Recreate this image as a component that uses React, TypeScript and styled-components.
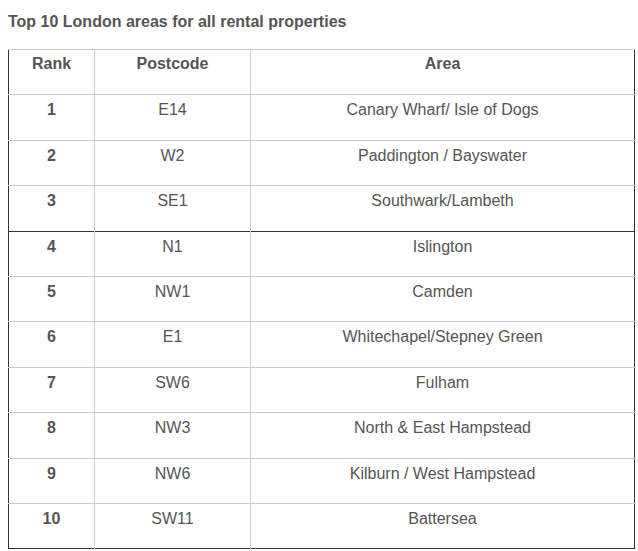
import React from "react";
import styled, { createGlobalStyle } from "styled-components";

const Global = createGlobalStyle`
  html, body { margin: 0; padding: 0; background: #fff; }
  body { font-family: "Liberation Sans", Arial, Helvetica, sans-serif; color: #555; }
`;

const Page = styled.div`
  padding: 13px 4px 0 8px;
`;

const Title = styled.h2`
  margin: 0 0 19px 0;
  font-size: 16px;
  line-height: 17px;
  font-weight: 700;
  color: #555;
`;

const Table = styled.table`
  border-collapse: collapse;
  width: 626px;
  border: 1px solid #333;
  table-layout: fixed;
`;

const Row = styled.tr<{ $dark?: boolean }>`
  height: 45.4px;
  border-top: 1px solid ${(p) => (p.$dark ? "#333" : "#ccc")};
`;

const Cell = styled.td<{ $bold?: boolean }>`
  border-left: 1px solid #ccc;
  padding: 5px 4px 0 4px;
  vertical-align: top;
  text-align: center;
  font-size: 16px;
  line-height: 20px;
  font-weight: ${(p) => (p.$bold ? 700 : 400)};
  color: #555;
  &:first-child { border-left: none; }
`;

const HeadCell = styled.th`
  border-left: 1px solid #ccc;
  padding: 4px 4px 0 4px;
  vertical-align: top;
  text-align: center;
  font-size: 16px;
  line-height: 20px;
  font-weight: 700;
  color: #555;
  &:first-child { border-left: none; }
`;

const rows: [string, string, string][] = [
  ["1", "E14", "Canary Wharf/ Isle of Dogs"],
  ["2", "W2", "Paddington / Bayswater"],
  ["3", "SE1", "Southwark/Lambeth"],
  ["4", "N1", "Islington"],
  ["5", "NW1", "Camden"],
  ["6", "E1", "Whitechapel/Stepney Green"],
  ["7", "SW6", "Fulham"],
  ["8", "NW3", "North & East Hampstead"],
  ["9", "NW6", "Kilburn / West Hampstead"],
  ["10", "SW11", "Battersea"],
];

export default function App() {
  return (
    <Page>
      <Global />
      <Title>Top 10 London areas for all rental properties</Title>
      <Table>
        <colgroup>
          <col style={{ width: 86 }} />
          <col style={{ width: 156 }} />
          <col style={{ width: 384 }} />
        </colgroup>
        <thead>
          <Row>
            <HeadCell>Rank</HeadCell>
            <HeadCell>Postcode</HeadCell>
            <HeadCell>Area</HeadCell>
          </Row>
        </thead>
        <tbody>
          {rows.map(([r, p, a]) => (
            <Row key={r} $dark={r === "4"}>
              <Cell $bold>{r}</Cell>
              <Cell>{p}</Cell>
              <Cell>{a}</Cell>
            </Row>
          ))}
        </tbody>
      </Table>
    </Page>
  );
}
